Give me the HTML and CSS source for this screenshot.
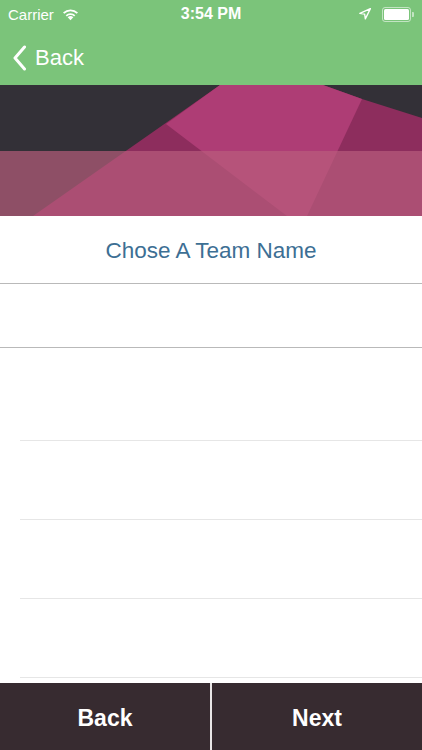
FILE: index.html
```html
<!DOCTYPE html>
<html>
<head>
<meta charset="utf-8">
<link rel="stylesheet" href="styles.css">
</head>
<body>
<div class="screen">
  <header class="topbar">
    <div class="status">
      <div class="status-left">
        <span>Carrier</span>
        <svg class="wifi" width="19" height="14" viewBox="0 0 18 13">
          <path d="M9 12.5 L6.3 9.6 A4 4 0 0 1 11.7 9.6 Z" fill="#fff"/>
          <path d="M4.4 7.6 A6.6 6.6 0 0 1 13.6 7.6 L12.4 8.9 A4.9 4.9 0 0 0 5.6 8.9 Z" fill="#fff"/>
          <path d="M1.9 5 A10.2 10.2 0 0 1 16.1 5 L14.9 6.3 A8.5 8.5 0 0 0 3.1 6.3 Z" fill="#fff"/>
        </svg>
      </div>
      <div class="status-time">3:54 PM</div>
      <div class="status-right">
        <svg class="loc" width="12" height="12" viewBox="0 0 11 11">
          <path d="M10.5 0.5 L0.8 5 L5.2 5.6 L5.8 10 Z" fill="none" stroke="#fff" stroke-width="1.2" stroke-linejoin="round"/>
        </svg>
        <div class="battery"><div class="battery-fill"></div></div>
        <div class="battery-tip"></div>
      </div>
    </div>
    <div class="nav">
      <svg class="chev" width="15" height="26" viewBox="0 0 14 26">
        <path d="M12 2 L2.5 13 L12 24" fill="none" stroke="#fff" stroke-width="3" stroke-linecap="round" stroke-linejoin="round"/>
      </svg>
      <span class="nav-back">Back</span>
    </div>
  </header>

  <div class="banner">
    <svg width="422" height="131" viewBox="0 0 422 131" preserveAspectRatio="none">
      <rect width="422" height="131" fill="#333037"/>
      <polygon points="220,0 323,0 362,14 422,33 422,131 33,131" fill="#8d2d5d"/>
      <polygon points="220,0 323,0 362,14 307,131 287,131 166,39" fill="#ae3d75"/>
      <rect y="66" width="422" height="65" fill="rgb(185,95,125)" fill-opacity="0.68"/>
    </svg>
  </div>

  <div class="title-row">Chose A Team Name</div>
  <div class="field-row"></div>

  <div class="list">
    <div class="row"></div>
    <div class="row"></div>
    <div class="row"></div>
    <div class="row"></div>
  </div>

  <footer class="bottombar">
    <div class="btn">Back</div>
    <div class="divider"></div>
    <div class="btn">Next</div>
  </footer>
</div>
</body>
</html>
```

FILE: styles.css
```css
html, body {
  margin: 0;
  padding: 0;
  background: #fff;
}
.screen {
  width: 422px;
  height: 750px;
  display: flex;
  flex-direction: column;
  font-family: "Liberation Sans", Arial, sans-serif;
  overflow: hidden;
}
.topbar {
  background: #7bc47a;
  height: 85px;
  display: flex;
  flex-direction: column;
  color: #fff;
}
.status {
  height: 28px;
  display: flex;
  align-items: center;
  justify-content: space-between;
  padding: 0 8px 0 8px;
  font-size: 15px;
  position: relative;
}
.status-left {
  display: flex;
  align-items: center;
  gap: 7px;
  width: 120px;
}
.status-time {
  font-weight: bold;
  font-size: 16px;
  position: absolute;
  left: 0;
  right: 0;
  text-align: center;
  pointer-events: none;
}
.status-right {
  display: flex;
  align-items: center;
}
.loc {
  margin-right: 11px;
}
.battery {
  width: 25px;
  height: 11px;
  border: 1px solid rgba(255,255,255,0.55);
  border-radius: 3px;
  padding: 1px;
  box-sizing: content-box;
}
.battery-fill {
  width: 100%;
  height: 100%;
  background: #fff;
  border-radius: 1.5px;
}
.battery-tip {
  width: 2px;
  height: 5px;
  background: rgba(255,255,255,0.55);
  border-radius: 0 1px 1px 0;
  margin-left: 1px;
}
.nav {
  flex: 1;
  display: flex;
  align-items: center;
  padding-left: 12px;
  gap: 8px;
  padding-top: 2px;
}
.nav-back {
  font-size: 22px;
}
.banner {
  height: 131px;
  line-height: 0;
}
.banner svg {
  display: block;
}
.title-row {
  height: 68px;
  display: flex;
  align-items: center;
  justify-content: center;
  font-size: 22.5px;
  color: #3d6f94;
  border-bottom: 1px solid #b9b9b9;
  box-sizing: border-box;
  padding-top: 2px;
}
.field-row {
  height: 64px;
  border-bottom: 1px solid #b9b9b9;
  box-sizing: border-box;
}
.list {
  flex: 1;
  padding-top: 14px;
}
.row {
  height: 79px;
  box-sizing: border-box;
  margin-left: 20px;
  border-bottom: 1px solid #e6e6e6;
}
.bottombar {
  height: 67px;
  background: #372b30;
  display: flex;
  align-items: stretch;
}
.btn {
  flex: 1;
  display: flex;
  align-items: center;
  justify-content: center;
  color: #fff;
  font-weight: bold;
  font-size: 23px;
  padding-top: 3px;
}
.divider {
  width: 2px;
  background: #e9e6e7;
}
```
